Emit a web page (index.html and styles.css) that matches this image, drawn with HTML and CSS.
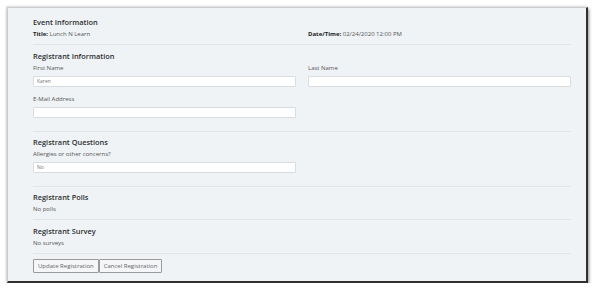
FILE: index.html
```html
<!DOCTYPE html>
<html lang="en">
<head>
<meta charset="utf-8">
<title>Registration</title>
<link rel="stylesheet" href="styles.css">
</head>
<body>
<div class="panel">
  <section class="sec sec-event">
    <h2 class="sec-title">Event Information</h2>
    <div class="two">
      <div class="info"><b>Title:</b> Lunch N Learn</div>
      <div class="info"><b>Date/Time:</b> 02/24/2020 12:00 PM</div>
    </div>
  </section>
  <hr class="rule">
  <section class="sec">
    <h2 class="sec-title">Registrant Information</h2>
    <div class="two">
      <div class="field">
        <label class="lbl">First Name</label>
        <div class="inp">Karen</div>
      </div>
      <div class="field">
        <label class="lbl">Last Name</label>
        <div class="inp"></div>
      </div>
    </div>
    <div class="two">
      <div class="field field-gap">
        <label class="lbl">E-Mail Address</label>
        <div class="inp"></div>
      </div>
    </div>
  </section>
  <hr class="rule rule-big">
  <section class="sec">
    <h2 class="sec-title">Registrant Questions</h2>
    <div class="two">
      <div class="field">
        <label class="lbl">Allergies or other concerns?</label>
        <div class="inp">No</div>
      </div>
    </div>
  </section>
  <hr class="rule rule-big">
  <section class="sec">
    <h2 class="sec-title">Registrant Polls</h2>
    <div class="info">No polls</div>
  </section>
  <hr class="rule">
  <section class="sec sec-survey">
    <h2 class="sec-title">Registrant Survey</h2>
    <div class="info">No surveys</div>
  </section>
  <hr class="rule">
  <div class="actions">
    <button class="btn">Update Registration</button><button class="btn">Cancel Registration</button>
  </div>
</div>
</body>
</html>
```

FILE: styles.css
```css
* { box-sizing: border-box; }
html, body { margin: 0; padding: 0; background: #ffffff; }
body { font-family: "Open Sans", "Noto Sans", sans-serif; color: #444; }

.panel {
  margin: 7px 0 0 7px;
  width: 581px;
  height: 276px;
  background: #eff3f6;
  border-left: 1px solid #c8ccd0;
  border-top: 1px solid #c8ccd0;
  border-right: 2px solid #2f2f2f;
  border-bottom: 2px solid #2f2f2f;
  box-shadow: 1px 2px 3px rgba(0,0,0,0.45), -1px -1px 2px rgba(0,0,0,0.12);
  padding: 8px 15px 0 25px;
}

.sec-title {
  margin: 0;
  font-size: 7.4px;
  line-height: 12px;
  font-weight: 600;
  color: #2e2e2e;
}

.two {
  display: grid;
  grid-template-columns: 1fr 1fr;
  column-gap: 12px;
}

.info {
  font-size: 6px;
  line-height: 10px;
  color: #555;
  margin-top: 1px;
}
.info b { color: #222; font-weight: 700; }

.rule {
  border: 0;
  height: 1px;
  background: #e1e5e9;
  margin: 5px 0 5px 0;
}
.rule-big { margin-top: 13px; margin-bottom: 4px; }

.field { display: flex; flex-direction: column; }
.field-gap { margin-top: 6px; }
.lbl {
  font-size: 6px;
  line-height: 10px;
  color: #555;
  margin-top: 1px;
}
.inp {
  margin-top: 3px;
  height: 11px;
  background: #ffffff;
  border: 1px solid #d9dde2;
  border-radius: 1px;
  font-size: 5px;
  line-height: 9px;
  padding-left: 3px;
  color: #777;
}

.sec-survey .sec-title { margin-top: 1px; }

.actions { display: flex; margin-top: 5px; }
.btn {
  font-family: inherit;
  font-size: 6px;
  height: 14px;
  padding: 0 4px;
  background: #f4f6f8;
  border: 1px solid #9a9a9a;
  color: #666;
  border-radius: 1px;
  margin: 0;
}
```
